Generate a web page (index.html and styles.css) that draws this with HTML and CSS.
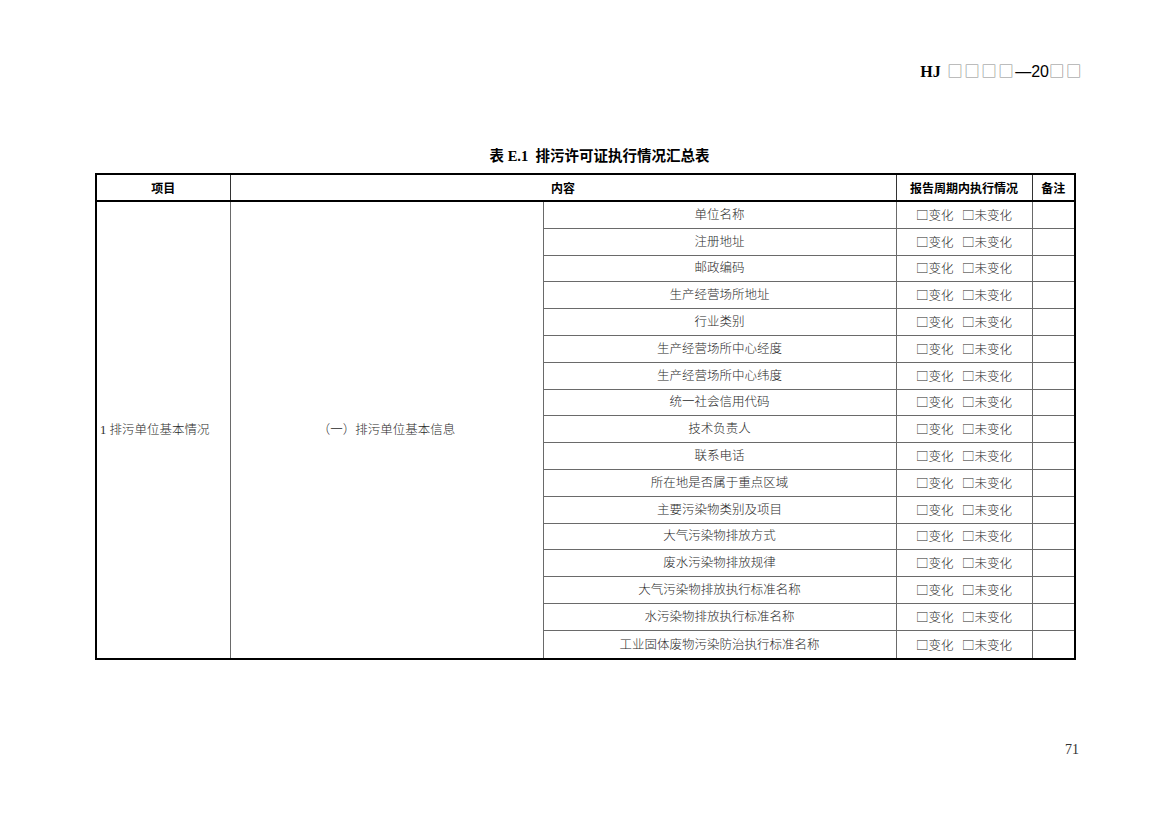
FILE: index.html
```html
<!DOCTYPE html>
<html lang="zh">
<head>
<meta charset="utf-8">
<title>表E.1 排污许可证执行情况汇总表</title>
<link rel="stylesheet" href="styles.css">
</head>
<body>
<div class="page">
  <div class="doc-code"><b>HJ</b> <span class="box">□□□□</span>—20<span class="box">□□</span></div>
  <div class="title">表 E.1&nbsp; 排污许可证执行情况汇总表</div>
  <table class="summary">
    <colgroup>
      <col class="c1"><col class="c2"><col class="c3"><col class="c4"><col class="c5">
    </colgroup>
    <thead>
      <tr>
        <th>项目</th>
        <th colspan="2">内容</th>
        <th>报告周期内执行情况</th>
        <th>备注</th>
      </tr>
    </thead>
    <tbody>
      <tr>
        <td rowspan="17" class="left">1 排污单位基本情况</td>
        <td rowspan="17">（一）排污单位基本信息</td>
        <td>单位名称</td><td class="st">□变化&nbsp;&nbsp; □未变化</td><td></td>
      </tr>
      <tr><td>注册地址</td><td class="st">□变化&nbsp;&nbsp; □未变化</td><td></td></tr>
      <tr><td>邮政编码</td><td class="st">□变化&nbsp;&nbsp; □未变化</td><td></td></tr>
      <tr><td>生产经营场所地址</td><td class="st">□变化&nbsp;&nbsp; □未变化</td><td></td></tr>
      <tr><td>行业类别</td><td class="st">□变化&nbsp;&nbsp; □未变化</td><td></td></tr>
      <tr><td>生产经营场所中心经度</td><td class="st">□变化&nbsp;&nbsp; □未变化</td><td></td></tr>
      <tr><td>生产经营场所中心纬度</td><td class="st">□变化&nbsp;&nbsp; □未变化</td><td></td></tr>
      <tr><td>统一社会信用代码</td><td class="st">□变化&nbsp;&nbsp; □未变化</td><td></td></tr>
      <tr><td>技术负责人</td><td class="st">□变化&nbsp;&nbsp; □未变化</td><td></td></tr>
      <tr><td>联系电话</td><td class="st">□变化&nbsp;&nbsp; □未变化</td><td></td></tr>
      <tr><td>所在地是否属于重点区域</td><td class="st">□变化&nbsp;&nbsp; □未变化</td><td></td></tr>
      <tr><td>主要污染物类别及项目</td><td class="st">□变化&nbsp;&nbsp; □未变化</td><td></td></tr>
      <tr><td>大气污染物排放方式</td><td class="st">□变化&nbsp;&nbsp; □未变化</td><td></td></tr>
      <tr><td>废水污染物排放规律</td><td class="st">□变化&nbsp;&nbsp; □未变化</td><td></td></tr>
      <tr><td>大气污染物排放执行标准名称</td><td class="st">□变化&nbsp;&nbsp; □未变化</td><td></td></tr>
      <tr><td>水污染物排放执行标准名称</td><td class="st">□变化&nbsp;&nbsp; □未变化</td><td></td></tr>
      <tr class="last"><td>工业固体废物污染防治执行标准名称</td><td class="st">□变化&nbsp;&nbsp; □未变化</td><td></td></tr>
    </tbody>
  </table>
  <div class="page-no">71</div>
</div>
</body>
</html>
```

FILE: styles.css
```css
html, body {
  margin: 0;
  padding: 0;
  background: #fff;
}
.page {
  width: 1169px;
  height: 826px;
  position: relative;
  font-family: "Liberation Serif", "Noto Sans CJK SC", serif;
  color: #1a1a1a;
  padding-top: 60px;
  box-sizing: border-box;
}
.doc-code {
  text-align: right;
  padding-right: 86px;
  font-size: 16px;
  line-height: 20px;
  height: 20px;
  color: #000;
  font-family: "Liberation Sans", sans-serif;
}
.doc-code b {
  font-family: "Liberation Serif", serif;
  font-weight: bold;
  margin-right: 2px;
}
.doc-code .box {
  font-family: "Noto Sans CJK SC", sans-serif;
  color: #888;
  font-size: 15.5px;
  letter-spacing: 1.5px;
}
.title {
  margin-top: 66px;
  height: 20px;
  line-height: 20px;
  text-align: center;
  padding-left: 30px;
  font-size: 14.5px;
  font-weight: bold;
  color: #000;
  font-family: "Liberation Serif", "Noto Sans CJK SC", serif;
}
.summary {
  margin-top: 7px;
  margin-left: 95px;
  width: 979px;
  table-layout: fixed;
  border-collapse: collapse;
  border: 2px solid #000;
  font-size: 12.5px;
}
.summary col.c1 { width: 134px; }
.summary col.c2 { width: 313px; }
.summary col.c3 { width: 353px; }
.summary col.c4 { width: 136px; }
.summary col.c5 { width: 43px; }
.summary th {
  height: 25px;
  line-height: 16px;
  padding: 0;
  font-weight: bold;
  font-size: 12px;
  color: #000;
  border: 1px solid #333;
  border-top: 2px solid #000;
  border-bottom: 2px solid #000;
  font-family: "Noto Sans CJK SC", sans-serif;
}
.summary td {
  height: 25.8px;
  line-height: 16px;
  padding: 0;
  text-align: center;
  vertical-align: middle;
  border: 1px solid #6a6a6a;
  color: #2a2a2a;
  font-family: "Liberation Serif", "Noto Sans CJK SC", serif;
  font-weight: 300;
}
.summary td.st {
  font-family: "Noto Sans CJK SC", sans-serif;
  font-size: 12.5px;
}
.summary tr.last td {
  height: 27.5px;
}
.summary td.left {
  text-align: left;
  padding-left: 3px;
}
.page-no {
  position: absolute;
  left: 1065px;
  top: 742px;
  font-size: 14px;
  color: #333;
  font-family: "Liberation Serif", serif;
}
```
